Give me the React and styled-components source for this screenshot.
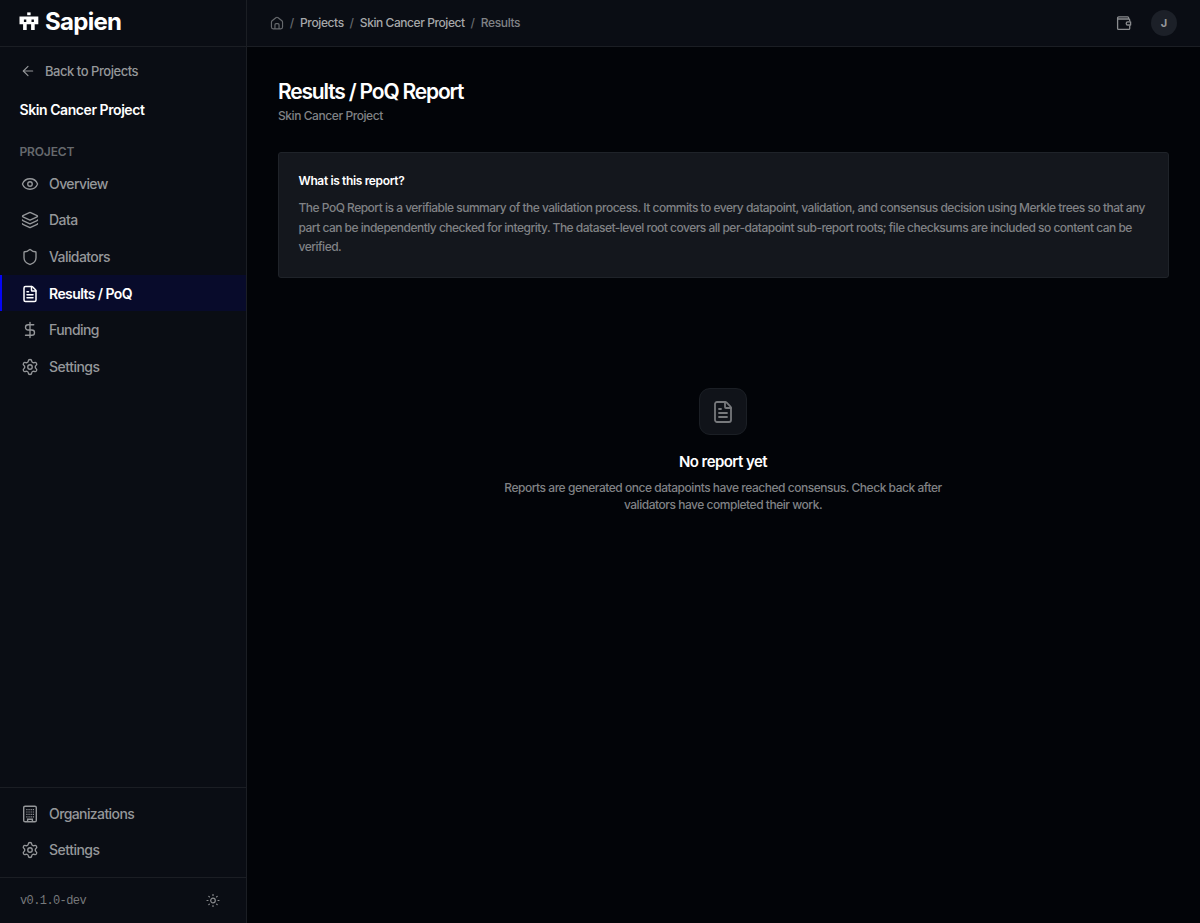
import React from "react";
import styled, { createGlobalStyle } from "styled-components";
import {
  ArrowLeft,
  Eye,
  Layers,
  Shield,
  FileText,
  DollarSign,
  Settings,
} from "lucide-react";

// styling
const GlobalStyle = createGlobalStyle`
  * { box-sizing: border-box; }
  body {
    margin: 0;
    background-color: #020408;
    color: #fff;
    font-family: Inter, "Liberation Sans", sans-serif;
    -webkit-font-smoothing: antialiased;
  }
`;

// one line of text, with tracking set per use
const Text = styled.span`
  white-space: nowrap;
  letter-spacing: ${(props) => props.$track || 0}px;
`;

const Container = styled.div`
  display: grid;
  grid-template-columns: 247px 1fr;
  height: 923px;
`;

const Sidebar = styled.aside`
  display: flex;
  flex-direction: column;
  background-color: #0a0d14;
  border-right: 1px solid #1b1e24;
`;

const LogoRow = styled.div`
  display: flex;
  align-items: center;
  gap: 6px;
  height: 47px;
  padding: 0 0 3px 19px;
  border-bottom: 1px solid #1b1e24;
`;

const Wordmark = styled(Text)`
  font-size: 24px;
  font-weight: 700;
  line-height: 28px;
`;

const BackLink = styled.a`
  display: flex;
  align-items: center;
  gap: 9px;
  height: 20px;
  margin-top: 14px;
  padding-left: 20px;
  color: #95979a;
  font-size: 13px;
  font-weight: 500;
`;

const ProjectName = styled.div`
  margin-top: 19px;
  padding-left: 19.5px;
  font-size: 14px;
  font-weight: 600;
  line-height: 20px;
`;

const SectionLabel = styled.div`
  margin-top: 24px;
  padding-left: 19.5px;
  height: 21px;
  color: #66696d;
  font-size: 12px;
  font-weight: 600;
  line-height: 16px;
`;

const Nav = styled.nav`
  display: flex;
  flex-direction: column;
`;

const NavItem = styled.a`
  display: flex;
  align-items: center;
  gap: 10px;
  height: 36.6px;
  padding-left: 19px;
  border-left: 2px solid ${(props) => (props.$active ? "#0505f5" : "transparent")};
  background-color: ${(props) => (props.$active ? "#080b2b" : "transparent")};
  color: ${(props) => (props.$active ? "#fff" : "#95979a")};
  font-size: 14px;
  font-weight: ${(props) => (props.$active ? 600 : 500)};

  svg {
    flex: none;
    margin-top: 1px;
  }
`;

const BottomNav = styled(Nav)`
  margin-top: auto;
  height: 90px;
  padding-top: 7px;
  border-top: 1px solid #1b1e24;
`;

const VersionRow = styled.div`
  display: flex;
  justify-content: space-between;
  align-items: center;
  height: 46px;
  padding: 0 26px 0 20px;
  border-top: 1px solid #1b1e24;
  color: #77797c;
  font-family: "Liberation Mono", monospace;
  font-size: 12px;
`;

const Main = styled.main`
  display: flex;
  flex-direction: column;
  min-width: 0;
`;

const TopBar = styled.header`
  display: flex;
  justify-content: space-between;
  align-items: center;
  height: 47px;
  padding: 0 23px;
  border-bottom: 1px solid #1b1e24;
  background-color: #0a0d14;
`;

const Breadcrumb = styled.div`
  display: flex;
  align-items: center;
  gap: 5.8px;
  padding-bottom: 1px;
  color: #66696d;
  font-size: 12px;
  font-weight: 500;

  svg {
    margin-top: 1px;
  }
`;

const Crumb = styled(Text)`
  color: ${(props) => (props.$current ? "#808285" : "#a6a8aa")};
`;

const Actions = styled.div`
  display: flex;
  align-items: center;
  gap: 19px;
`;

const Avatar = styled.div`
  display: flex;
  justify-content: center;
  align-items: center;
  width: 26px;
  height: 26px;
  border-radius: 50%;
  background-color: #1c2028;
  color: #95979a;
  font-size: 11px;
  font-weight: 700;
`;

const Content = styled.div`
  padding: 31px 31px 0;
`;

const Title = styled.h1`
  margin: 0;
  font-size: 21px;
  font-weight: 600;
  line-height: 27px;
`;

const Subtitle = styled.div`
  margin-top: 2px;
  color: #808285;
  font-size: 12px;
  font-weight: 500;
  line-height: 18px;
`;

const InfoCard = styled.section`
  margin-top: 27px;
  height: 126px;
  padding: 18px 19.5px;
  border: 1px solid #1f2329;
  border-radius: 3px;
  background-color: #14171d;
`;

const InfoTitle = styled.div`
  font-size: 12px;
  font-weight: 600;
  line-height: 20px;
`;

const InfoBody = styled.div`
  display: flex;
  flex-direction: column;
  margin-top: 7px;
  color: #808285;
  font-size: 12px;
  font-weight: 500;
  line-height: 19.6px;
`;

const EmptyState = styled.section`
  display: flex;
  flex-direction: column;
  align-items: center;
  margin-top: 110px;
  padding-right: 1px;
`;

const IconTile = styled.div`
  display: flex;
  justify-content: center;
  align-items: center;
  width: 48px;
  height: 47px;
  border: 1px solid #1b1f25;
  border-radius: 11px;
  background-color: #101319;
  color: #77797c;
`;

const EmptyTitle = styled.div`
  margin-top: 16px;
  font-size: 15px;
  font-weight: 600;
  line-height: 21px;
`;

const EmptyBody = styled.div`
  display: flex;
  flex-direction: column;
  align-items: center;
  margin-top: 7px;
  color: #808285;
  font-size: 12px;
  font-weight: 500;
  line-height: 17.4px;
`;

// icons
const LogoMark = () => (
  <svg width="20" height="20" viewBox="0 0 20 20" fill="#fff">
    <path d="M8.2.4h3.4v2.8H8.2z" />
    <path
      fillRule="evenodd"
      d="M.5 4.4h18.8v7.8h-3.6v5.9h-3.6v-5.9H7.7v5.9H4.1v-5.9H.5zM4.9 7.6v2.4h2.4V7.6zM12.5 7.6v2.4h2.4V7.6z"
    />
  </svg>
);

const HomeIcon = () => (
  <svg width="14" height="14" viewBox="0 0 24 24" fill="none" stroke="currentColor" strokeWidth="2" strokeLinecap="round" strokeLinejoin="round">
    <path d="M2.5 10.5a3 3 0 0 1 1.1-2.3l6.5-5.3a3 3 0 0 1 3.8 0l6.5 5.3a3 3 0 0 1 1.1 2.3V19a3 3 0 0 1-3 3h-13a3 3 0 0 1-3-3zM8.5 22v-7a2 2 0 0 1 2-2h3a2 2 0 0 1 2 2v7" />
  </svg>
);

const WalletIcon = () => (
  <svg width="16" height="16" viewBox="0 0 16 16" fill="none" stroke="#8a8c8f" strokeWidth="1.3" strokeLinejoin="round">
    <path d="M13.7 6.3V5a1 1 0 0 0-1-1H2.2M13.7 10.4v3a1 1 0 0 1-1 1H2.6a1 1 0 0 1-1-1V3a1.2 1.2 0 0 1 1.2-1.2h8.8a1 1 0 0 1 1 1V4" />
    <path d="M14.6 6.8h-2.8a1.6 1.6 0 0 0 0 3.2h2.8z" />
  </svg>
);

const BuildingIcon = () => (
  <svg width="18" height="18" viewBox="0 0 18 18" fill="none" stroke="currentColor" strokeWidth="1.4">
    <rect x="2.7" y="1.2" width="12.6" height="15.6" rx="1.4" />
    <path d="M6.6 16.5v-2.2h4.8v2.2" />
    <path d="M5.3 4.6h8M5.3 7h8M5.3 9.4h8M5.3 11.8h8" strokeWidth="1.2" strokeDasharray="1.2 0.95" />
  </svg>
);

const SunIcon = () => (
  <svg width="14" height="14" viewBox="0 0 14 14" fill="none" stroke="#8a8c8f" strokeWidth="1.2" strokeLinecap="round">
    <circle cx="7" cy="6.5" r="2.3" />
    <path d="M7 .5v1M7 11.5v1M1 6.5h1M12 6.5h1M2.8 2.3l.6.6M10.6 10.1l.6.6M2.8 10.7l.6-.6M10.6 2.9l.6-.6" />
  </svg>
);

const navItems = [
  { label: "Overview", icon: <Eye size={18} strokeWidth={1.8} />, track: -0.6 },
  { label: "Data", icon: <Layers size={18} strokeWidth={1.8} />, track: -0.55 },
  { label: "Validators", icon: <Shield size={18} strokeWidth={1.8} />, track: -0.58 },
  { label: "Results / PoQ", icon: <FileText size={18} strokeWidth={2} />, track: -0.58, active: true },
  { label: "Funding", icon: <DollarSign size={18} strokeWidth={1.8} />, track: -0.58 },
  { label: "Settings", icon: <Settings size={18} strokeWidth={1.8} />, track: -0.5 },
];

// Main function
function App() {
  return (
    <>
      <GlobalStyle />
      <Container>
        <Sidebar>
          <LogoRow>
            <LogoMark />
            <Wordmark $track={-0.7}>Sapien</Wordmark>
          </LogoRow>
          <BackLink>
            <ArrowLeft size={16} strokeWidth={1.7} />
            <Text $track={-0.46}>Back to Projects</Text>
          </BackLink>
          <ProjectName><Text $track={-0.43}>Skin Cancer Project</Text></ProjectName>
          <SectionLabel><Text $track={-0.15}>PROJECT</Text></SectionLabel>
          <Nav>
            {navItems.map((item) => (
              <NavItem key={item.label} $active={item.active}>
                {item.icon}
                <Text $track={item.track}>{item.label}</Text>
              </NavItem>
            ))}
          </Nav>
          <BottomNav>
            <NavItem>
              <BuildingIcon />
              <Text $track={-0.6}>Organizations</Text>
            </NavItem>
            <NavItem>
              <Settings size={18} strokeWidth={1.8} />
              <Text $track={-0.5}>Settings</Text>
            </NavItem>
          </BottomNav>
          <VersionRow>
            <Text $track={-0.6}>v0.1.0-dev</Text>
            <SunIcon />
          </VersionRow>
        </Sidebar>
        <Main>
          <TopBar>
            <Breadcrumb>
              <HomeIcon />
              <span>/</span>
              <Crumb $track={-0.38}>Projects</Crumb>
              <span>/</span>
              <Crumb $track={-0.43}>Skin Cancer Project</Crumb>
              <span>/</span>
              <Crumb $track={-0.35} $current>Results</Crumb>
            </Breadcrumb>
            <Actions>
              <WalletIcon />
              <Avatar>J</Avatar>
            </Actions>
          </TopBar>
          <Content>
            <Title><Text $track={-1.18}>Results / PoQ Report</Text></Title>
            <Subtitle><Text $track={-0.43}>Skin Cancer Project</Text></Subtitle>
            <InfoCard>
              <InfoTitle><Text $track={-0.36}>What is this report?</Text></InfoTitle>
              <InfoBody>
                <Text $track={-0.505}>The PoQ Report is a verifiable summary of the validation process. It commits to every datapoint, validation, and consensus decision using Merkle trees so that any</Text>
                <Text $track={-0.515}>part can be independently checked for integrity. The dataset-level root covers all per-datapoint sub-report roots; file checksums are included so content can be</Text>
                <Text $track={-0.5}>verified.</Text>
              </InfoBody>
            </InfoCard>
            <EmptyState>
              <IconTile>
                <FileText size={24} strokeWidth={1.8} />
              </IconTile>
              <EmptyTitle><Text $track={-0.55}>No report yet</Text></EmptyTitle>
              <EmptyBody>
                <Text $track={-0.47}>Reports are generated once datapoints have reached consensus. Check back after</Text>
                <Text $track={-0.47}>validators have completed their work.</Text>
              </EmptyBody>
            </EmptyState>
          </Content>
        </Main>
      </Container>
    </>
  );
}

export default App;
